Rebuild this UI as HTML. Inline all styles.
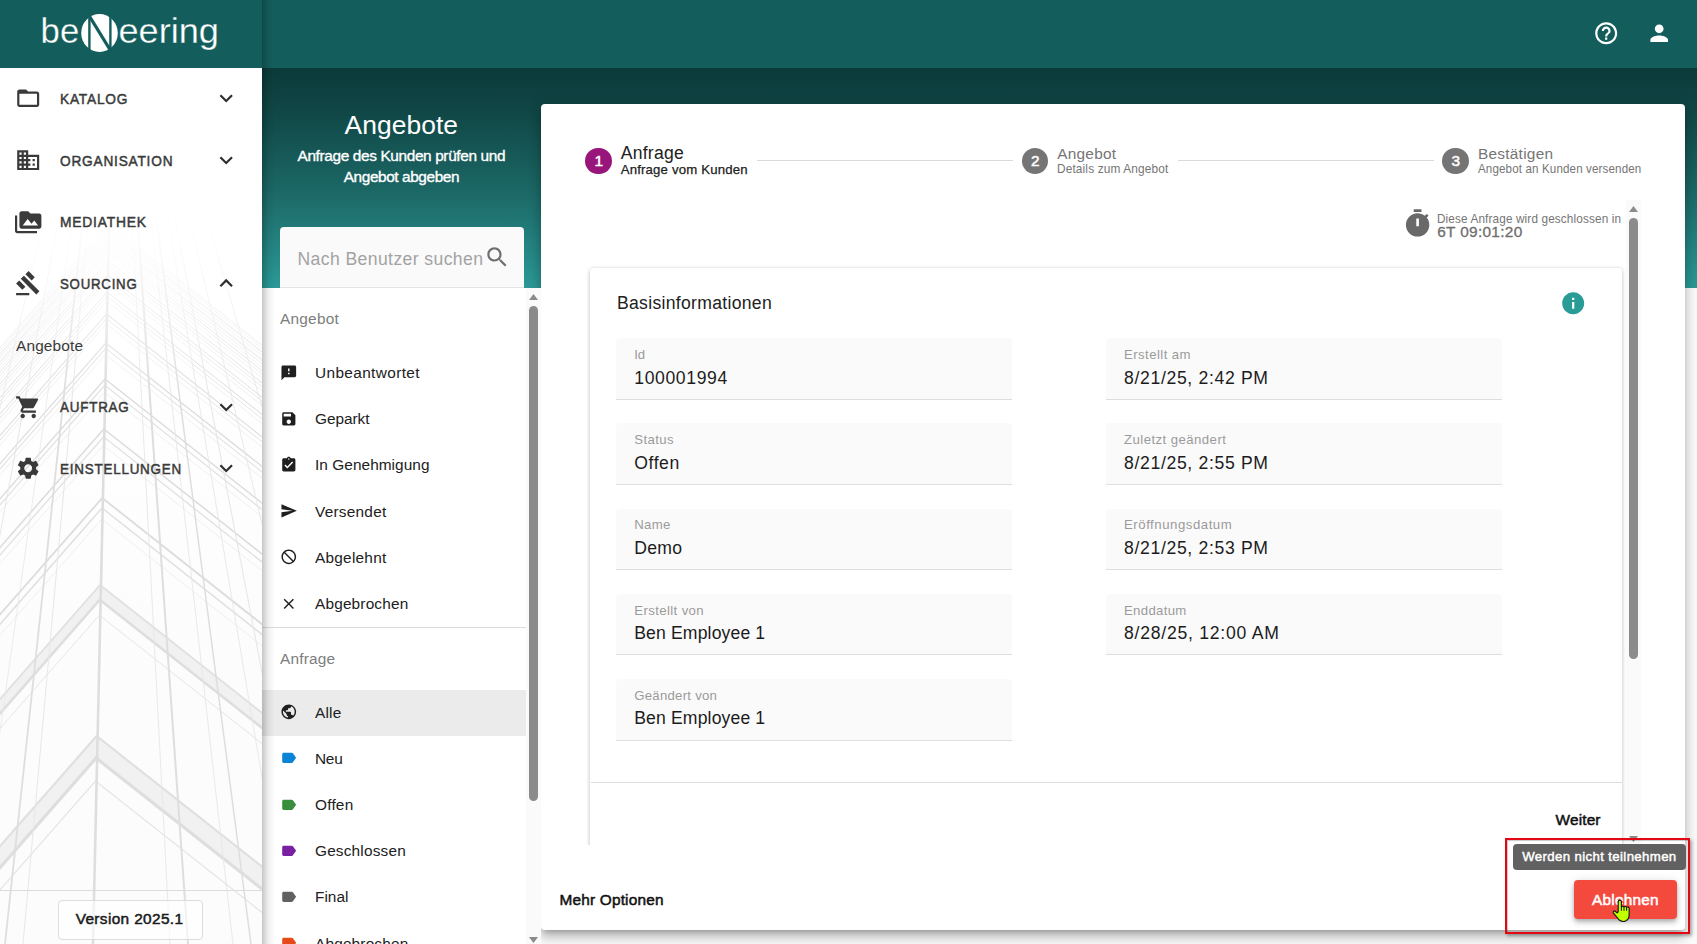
<!DOCTYPE html>
<html><head><meta charset="utf-8"><title>Angebote</title>
<style>
html,body{margin:0;padding:0}
html{width:1697px;height:944px;overflow:hidden}
body{width:1697px;height:944px;overflow:hidden;position:relative;background:#fafafa;font-family:"Liberation Sans",sans-serif}
.a{position:absolute}
.t{position:absolute;white-space:pre;line-height:1;font-family:"Liberation Sans",sans-serif}
#texts{position:absolute;left:0;top:0;z-index:5}
svg{position:absolute;overflow:visible}
#topbar{left:0;top:0;width:1697px;height:68px;background:#135e5c}
#grad{left:262px;top:68px;width:1435px;height:220px;background:linear-gradient(180deg,#0b3a3a 0%,#104746 20%,#1b6765 55%,#2b9996 100%)}
#side{left:0;top:68px;width:262px;height:876px;background:linear-gradient(180deg,#fff 30%,#fcfcfc 70%);overflow:hidden}
#sideshadow{left:262px;top:0;width:13px;height:944px;background:linear-gradient(90deg,rgba(0,0,0,.22),rgba(0,0,0,.06) 50%,rgba(0,0,0,0));z-index:3}
#list{left:262px;top:288px;width:279px;height:656px;background:#fff}
#search{left:280px;top:227px;width:244px;height:60px;background:#fafafa;border-radius:4px 4px 0 0;border-bottom:1px solid #e4e4e4}
#sel{left:262px;top:690px;width:264px;height:46px;background:#ebebeb}
#ldiv{left:262px;top:627px;width:264px;height:1px;background:#dcdcdc}
#lsb{left:526px;top:288px;width:15px;height:656px;background:#fafafa}
#lthumb{left:529px;top:306px;width:9px;height:495px;background:#8b8b8b;border-radius:5px}
#card{left:541px;top:104px;width:1144px;height:826px;background:#fff;border-radius:4px;box-shadow:0 5px 5px -3px rgba(0,0,0,.2),0 8px 10px 1px rgba(0,0,0,.14),0 3px 14px 2px rgba(0,0,0,.12)}
#inner{left:586px;top:262px;width:1040px;height:583px;overflow:hidden}
#icard{left:4px;top:5.6px;width:1031.5px;height:620px;background:#fff;border-radius:4px;box-shadow:0 1px 4px 0 rgba(0,0,0,.28)}
.f{position:absolute;width:395.5px;height:61px;background:#fafafa;border-bottom:1px solid #dedede;border-radius:4px 4px 0 0}
.sl{position:absolute;height:1px;background:#dadada;top:160px}
.sc{position:absolute;width:26.6px;height:26.6px;border-radius:50%;top:147.6px;background:#757575}
#isb{left:1626px;top:200px;width:15px;height:645px;background:#fafafa}
#ithumb{left:1629.3px;top:218px;width:8.8px;height:440.5px;background:#8b8b8b;border-radius:5px}
#idiv{left:590.5px;top:782px;width:1031px;height:1px;background:#dcdcdc}
#tip{left:1513px;top:844px;width:173px;height:26px;background:#616161;border-radius:4px;z-index:4}
#btn{left:1574px;top:880px;width:103px;height:39px;background:#f44a3e;border-radius:4px;box-shadow:0 2px 4px -1px rgba(0,0,0,.2),0 4px 5px 0 rgba(0,0,0,.14),0 1px 10px 0 rgba(0,0,0,.12);z-index:4}
#red{left:1505px;top:838px;width:181px;height:92px;border:2px solid #e30613;z-index:6;box-shadow:inset 1px 1px 1px rgba(0,0,0,.22),2px 2px 3px rgba(0,0,0,.3)}
#ver{left:58px;top:900px;width:142.5px;height:37.5px;border:1px solid #dcdcdc;border-radius:4px;background:rgba(255,255,255,.6)}
#sdiv{left:0;top:890px;width:262px;height:1px;background:#dcdcdc}

</style></head>
<body>
<div class="a" id="grad"></div>
<div class="a" id="topbar"></div>
<!-- SIDEBAR -->
<div class="a" id="side">
<svg style="left:0;top:0" width="262" height="876" viewBox="0 0 262 876"><path d="M-6 785.0L96.6 668.0L268 803.4L268 825.8L96.1 690.0L-6 806.4Z" fill="#f1f1f1"/><path d="M-6 785.0L96.6 668.0L268 803.4" stroke="#e0e0e0" stroke-width="2.20" fill="none" stroke-linejoin="miter"/><path d="M-6 806.4L96.1 690.0L268 825.8" stroke="#dedede" stroke-width="3.20" fill="none" stroke-linejoin="miter"/><path d="M-6 828.8L95.5 713.1L268 849.3" stroke="#e4e4e4" stroke-width="1.20" fill="none" stroke-linejoin="miter"/><path d="M-6 638.0L100.1 517.0L268 649.6L268 664.6L99.8 531.7L-6 652.3Z" fill="#f1f1f1"/><path d="M-6 638.0L100.1 517.0L268 649.6" stroke="#e0e0e0" stroke-width="1.80" fill="none" stroke-linejoin="miter"/><path d="M-6 652.3L99.8 531.7L268 664.6" stroke="#dedede" stroke-width="2.62" fill="none" stroke-linejoin="miter"/><path d="M-6 667.3L99.4 547.1L268 680.3" stroke="#e4e4e4" stroke-width="0.98" fill="none" stroke-linejoin="miter"/><path d="M-6 553.3L102.2 430.0L268 561.0" stroke="#dcdcdc" stroke-width="1.80" fill="none" stroke-linejoin="miter"/><path d="M-6 563.1L102.0 440.0L268 571.2" stroke="#e0e0e0" stroke-width="1.50" fill="none" stroke-linejoin="miter"/><path d="M-6 573.9L101.7 451.2L268 582.6" stroke="#e6e6e6" stroke-width="0.60" fill="none" stroke-linejoin="miter"/><path d="M-6 486.2L103.8 361.0L268 490.7" stroke="#dcdcdc" stroke-width="1.57" fill="none" stroke-linejoin="miter"/><path d="M-6 493.8L103.6 368.8L268 498.7" stroke="#e0e0e0" stroke-width="1.31" fill="none" stroke-linejoin="miter"/><path d="M-6 502.2L103.4 377.5L268 507.5" stroke="#e6e6e6" stroke-width="0.60" fill="none" stroke-linejoin="miter"/><path d="M-6 437.5L105.0 311.0L268 439.8" stroke="#dcdcdc" stroke-width="1.36" fill="none" stroke-linejoin="miter"/><path d="M-6 443.7L104.8 317.4L268 446.3" stroke="#e0e0e0" stroke-width="1.14" fill="none" stroke-linejoin="miter"/><path d="M-6 450.6L104.7 324.5L268 453.5" stroke="#e6e6e6" stroke-width="0.60" fill="none" stroke-linejoin="miter"/><path d="M-6 402.5L105.8 275.0L268 403.1" stroke="#dcdcdc" stroke-width="1.20" fill="none" stroke-linejoin="miter"/><path d="M-6 407.8L105.7 280.4L268 408.7" stroke="#e0e0e0" stroke-width="1.01" fill="none" stroke-linejoin="miter"/><path d="M-6 413.7L105.6 286.5L268 414.8" stroke="#e6e6e6" stroke-width="0.60" fill="none" stroke-linejoin="miter"/><path d="M-6 374.3L106.5 246.0L268 373.6" stroke="#dcdcdc" stroke-width="1.08" fill="none" stroke-linejoin="miter"/><path d="M-6 378.9L106.4 250.7L268 378.4" stroke="#e0e0e0" stroke-width="0.91" fill="none" stroke-linejoin="miter"/><path d="M-6 384.0L106.3 256.0L268 383.8" stroke="#e6e6e6" stroke-width="0.60" fill="none" stroke-linejoin="miter"/><path d="M-6 352.8L107.0 224.0L268 351.2" stroke="#dcdcdc" stroke-width="0.99" fill="none" stroke-linejoin="miter"/><path d="M-6 357.0L106.9 228.2L268 355.5" stroke="#e0e0e0" stroke-width="0.84" fill="none" stroke-linejoin="miter"/><path d="M-6 361.5L106.8 232.9L268 360.3" stroke="#e6e6e6" stroke-width="0.60" fill="none" stroke-linejoin="miter"/><path d="M-6 336.3L107.4 207.0L268 333.9" stroke="#dcdcdc" stroke-width="0.92" fill="none" stroke-linejoin="miter"/><path d="M-6 340.1L107.3 210.9L268 337.8" stroke="#e0e0e0" stroke-width="0.78" fill="none" stroke-linejoin="miter"/><path d="M-6 344.2L107.2 215.2L268 342.2" stroke="#e6e6e6" stroke-width="0.60" fill="none" stroke-linejoin="miter"/><path d="M-6 322.7L107.8 193.0L268 319.6" stroke="#dcdcdc" stroke-width="0.86" fill="none" stroke-linejoin="miter"/><path d="M-6 326.2L107.7 196.6L268 323.2" stroke="#e0e0e0" stroke-width="0.73" fill="none" stroke-linejoin="miter"/><path d="M-6 330.0L107.6 200.5L268 327.3" stroke="#e6e6e6" stroke-width="0.60" fill="none" stroke-linejoin="miter"/><path d="M-6 311.0L108.0 181.0L268 307.4" stroke="#dcdcdc" stroke-width="0.81" fill="none" stroke-linejoin="miter"/><path d="M-6 314.2L108.0 184.3L268 310.8" stroke="#e0e0e0" stroke-width="0.69" fill="none" stroke-linejoin="miter"/><path d="M-6 317.9L107.9 188.0L268 314.5" stroke="#e6e6e6" stroke-width="0.60" fill="none" stroke-linejoin="miter"/><path d="M-6 301.3L108.3 171.0L268 297.2" stroke="#dcdcdc" stroke-width="0.76" fill="none" stroke-linejoin="miter"/><path d="M-6 304.3L108.2 174.1L268 300.4" stroke="#e0e0e0" stroke-width="0.65" fill="none" stroke-linejoin="miter"/><path d="M-6 307.7L108.1 177.6L268 303.9" stroke="#e6e6e6" stroke-width="0.60" fill="none" stroke-linejoin="miter"/><path d="M-6 293.5L108.5 163.0L268 289.0" stroke="#dcdcdc" stroke-width="0.73" fill="none" stroke-linejoin="miter"/><path d="M-6 296.4L108.4 166.0L268 292.1" stroke="#e0e0e0" stroke-width="0.62" fill="none" stroke-linejoin="miter"/><path d="M-6 299.6L108.3 169.3L268 295.5" stroke="#e6e6e6" stroke-width="0.60" fill="none" stroke-linejoin="miter"/><path d="M-6 286.7L108.6 156.0L268 281.9" stroke="#dcdcdc" stroke-width="0.70" fill="none" stroke-linejoin="miter"/><path d="M-6 289.5L108.6 158.9L268 284.8" stroke="#e0e0e0" stroke-width="0.60" fill="none" stroke-linejoin="miter"/><path d="M-6 292.5L108.5 162.0L268 288.1" stroke="#e6e6e6" stroke-width="0.60" fill="none" stroke-linejoin="miter"/><path d="M116.0 -158.0L-125 876" stroke="#e7e7e7" stroke-width="0.8" fill="none"/><path d="M116.0 -158.0L-76 876" stroke="#e7e7e7" stroke-width="1" fill="none"/><path d="M116.0 -158.0L-30 876" stroke="#e7e7e7" stroke-width="0.8" fill="none"/><path d="M116.0 -158.0L5 876" stroke="#dedede" stroke-width="1.8" fill="none"/><path d="M116.0 -158.0L23 876" stroke="#e7e7e7" stroke-width="1" fill="none"/><path d="M116.0 -158.0L93 876" stroke="#dedede" stroke-width="2.6" fill="none"/><path d="M116.0 -158.0L170 876" stroke="#e7e7e7" stroke-width="0.9" fill="none"/><path d="M116.0 -158.0L188 876" stroke="#dedede" stroke-width="2" fill="none"/><path d="M116.0 -158.0L233 876" stroke="#e7e7e7" stroke-width="0.9" fill="none"/><path d="M116.0 -158.0L251 876" stroke="#dedede" stroke-width="1.5" fill="none"/><path d="M116.0 -158.0L290 876" stroke="#e7e7e7" stroke-width="0.9" fill="none"/><path d="M116.0 -158.0L314 876" stroke="#e7e7e7" stroke-width="1.1" fill="none"/><path d="M116.0 -158.0L362 876" stroke="#e7e7e7" stroke-width="0.9" fill="none"/><path d="M116.0 -158.0L420 876" stroke="#e7e7e7" stroke-width="1" fill="none"/></svg><div class="a" style="left:0;top:0;width:262px;height:330px;background:linear-gradient(180deg,#fff 0%,#fff 42%,rgba(255,255,255,.8) 58%,rgba(255,255,255,.35) 80%,rgba(255,255,255,0) 100%)"></div>
</div>
<div class="a" id="sdiv"></div>
<div class="a" id="ver"></div>
<div class="a" id="sideshadow"></div>
<!-- LOGO -->
<svg id="logo" style="left:0;top:0" width="262" height="68" viewBox="0 0 262 68">
 <g font-family="Liberation Sans, sans-serif" font-size="35" fill="#fff" stroke="#135e5c" stroke-width="0.3">
  <text x="40.6" y="43.4" textLength="38.6" lengthAdjust="spacingAndGlyphs">be</text>
  <text x="118.4" y="43.4" textLength="100.6" lengthAdjust="spacingAndGlyphs">eering</text>
 </g>
 <ellipse cx="99.5" cy="33" rx="18.3" ry="18.9" fill="#fff"/>
 <g stroke="#135e5c" stroke-width="2.4" fill="none" stroke-linecap="butt">
  <path d="M89.4 13V53"/><path d="M110.4 13V53"/><path d="M89.6 16.5L110.2 50" stroke-width="3.3"/>
 </g>
</svg>
<!-- topbar icons -->
<svg style="left:1592.8px;top:19.8px" width="26.4" height="26.4" viewBox="0 0 24 24"><path fill="#fff" d="M11 18h2v-2h-2v2zm1-16C6.48 2 2 6.48 2 12s4.48 10 10 10 10-4.480 10-10S17.520 2 12 2zm0 18c-4.410 0-8-3.590-8-8s3.590-8 8-8 8 3.590 8 8-3.590 8-8 8zm0-14c-2.210 0-4 1.790-4 4h2c0-1.100.9-2 2-2s2 .9 2 2c0 2-3 1.750-3 5h2c0-2.250 3-2.500 3-5 0-2.210-1.790-4-4-4z"/></svg>
<svg style="left:1645.8px;top:19.8px" width="26.4" height="26.4" viewBox="0 0 24 24"><path fill="#fff" d="M12 12c2.210 0 4-1.790 4-4s-1.790-4-4-4-4 1.790-4 4 1.790 4 4 4zm0 2c-2.670 0-8 1.340-8 4v2h16v-2c0-2.660-5.330-4-8-4z"/></svg>
<!-- sidebar icons -->
<svg style="left:15.05px;top:85.40px" width="26.4" height="26.4" viewBox="0 0 24 24"><path fill="#3a3a3a" d="M20 6h-8l-2-2H4c-1.100 0-1.990.9-1.990 2L2 18c0 1.100.9 2 2 2h16c1.100 0 2-.9 2-2V8c0-1.100-.9-2-2-2zm0 12H4V8h16v10z"/></svg>
<svg style="left:213.30px;top:85.40px" width="26.4" height="26.4" viewBox="0 0 24 24"><path fill="#2e2e2e" d="M16.590 8.590L12 13.170 7.410 8.590 6 10l6 6 6-6z"/></svg>
<svg style="left:15.05px;top:147.07px" width="26.4" height="26.4" viewBox="0 0 24 24"><path fill="#3a3a3a" d="M12 7V3H2v18h20V7H12zM6 19H4v-2h2v2zm0-4H4v-2h2v2zm0-4H4V9h2v2zm0-4H4V5h2v2zm4 12H8v-2h2v2zm0-4H8v-2h2v2zm0-4H8V9h2v2zm0-4H8V5h2v2zm10 12h-8v-2h2v-2h-2v-2h2v-2h-2V9h8v10zm-2-8h-2v2h2v-2zm0 4h-2v2h2v-2z"/></svg>
<svg style="left:213.30px;top:147.07px" width="26.4" height="26.4" viewBox="0 0 24 24"><path fill="#2e2e2e" d="M16.590 8.590L12 13.170 7.410 8.590 6 10l6 6 6-6z"/></svg>
<svg style="left:15.05px;top:208.74px" width="26.4" height="26.4" viewBox="0 0 24 24"><path fill="#3a3a3a" d="M2 6H0v5h.01L0 20c0 1.100.9 2 2 2h18v-2H2V6zm20-2h-8l-2-2H6c-1.100 0-1.990.9-1.990 2L4 16c0 1.100.9 2 2 2h16c1.100 0 2-.9 2-2V6c0-1.100-.9-2-2-2zM7 15l4.500-6 3.500 4.510 2.500-3.010L21 15H7z"/></svg>
<svg style="left:15.05px;top:270.41px" width="26.4" height="26.4" viewBox="0 0 24 24"><path fill="#3a3a3a" d="M1 21h12v2H1zM5.245 8.070l2.830-2.827 14.140 14.142-2.828 2.828zM12.317 1l5.657 5.656-2.830 2.830-5.654-5.660zM3.825 9.485l5.657 5.657-2.828 2.828-5.657-5.657z"/></svg>
<svg style="left:213.30px;top:270.41px" width="26.4" height="26.4" viewBox="0 0 24 24"><path fill="#2e2e2e" d="M12 8l-6 6 1.410 1.410L12 10.830l4.590 4.580L18 14z"/></svg>
<svg style="left:15.05px;top:393.75px" width="26.4" height="26.4" viewBox="0 0 24 24"><path fill="#3a3a3a" d="M7 18c-1.100 0-1.990.9-1.990 2S5.900 22 7 22s2-.9 2-2-.9-2-2-2zM1 2v2h2l3.600 7.590-1.350 2.450c-.16.28-.25.61-.25.96 0 1.100.9 2 2 2h12v-2H7.420c-.14 0-.25-.11-.25-.25l.03-.12.9-1.630h7.450c.75 0 1.410-.41 1.750-1.030l3.580-6.490c.08-.14.12-.31.12-.48 0-.55-.45-1-1-1H5.210l-.94-2H1zm16 16c-1.100 0-1.990.9-1.990 2s.89 2 1.990 2 2-.9 2-2-.9-2-2-2z"/></svg>
<svg style="left:213.30px;top:393.75px" width="26.4" height="26.4" viewBox="0 0 24 24"><path fill="#2e2e2e" d="M16.590 8.590L12 13.170 7.410 8.590 6 10l6 6 6-6z"/></svg>
<svg style="left:15.05px;top:455.42px" width="26.4" height="26.4" viewBox="0 0 24 24"><path fill="#3a3a3a" d="M19.140 12.940c.04-.3.06-.61.06-.94 0-.32-.02-.64-.07-.94l2.030-1.580c.18-.14.23-.41.12-.61l-1.920-3.320c-.12-.22-.37-.29-.59-.22l-2.390.96c-.5-.38-1.030-.7-1.620-.94l-.36-2.540c-.04-.24-.24-.41-.48-.41h-3.840c-.24 0-.43.17-.47.41l-.36 2.540c-.59.24-1.130.57-1.620.94l-2.390-.96c-.22-.08-.47 0-.59.22L2.740 8.870c-.12.21-.08.47.12.61l2.030 1.580c-.05.3-.09.63-.09.94s.02.64.07.94l-2.030 1.580c-.18.14-.23.41-.12.61l1.920 3.320c.12.22.37.29.59.22l2.390-.96c.5.38 1.030.7 1.620.94l.36 2.540c.05.24.24.41.48.41h3.840c.24 0 .44-.17.47-.41l.36-2.540c.59-.24 1.130-.56 1.620-.94l2.390.96c.22.08.47 0 .59-.22l1.920-3.320c.12-.22.07-.47-.12-.61l-2.010-1.580zM12 15.600c-1.980 0-3.600-1.620-3.600-3.600s1.620-3.600 3.600-3.600 3.600 1.620 3.600 3.600-1.620 3.600-3.600 3.600z"/></svg>
<svg style="left:213.30px;top:455.42px" width="26.4" height="26.4" viewBox="0 0 24 24"><path fill="#2e2e2e" d="M16.590 8.590L12 13.170 7.410 8.590 6 10l6 6 6-6z"/></svg>
<!-- MIDDLE -->
<div class="a" id="search"></div>
<svg style="left:483.8px;top:243.5px" width="26.4" height="26.4" viewBox="0 0 24 24"><path fill="#6f6f6f" d="M15.5 14h-.79l-.28-.27C15.410 12.590 16 11.110 16 9.500 16 5.910 13.090 3 9.500 3S3 5.910 3 9.500 5.910 16 9.500 16c1.610 0 3.090-.59 4.230-1.570l.27.28v.79l5 4.990L20.490 19l-4.990-5zm-6 0C7.010 14 5 11.990 5 9.500S7.010 5 9.500 5 14 7.010 14 9.500 11.990 14 9.500 14z"/></svg>
<!-- CARD -->
<div class="a" id="card"></div>
<div class="a" id="list"></div>
<div class="a" id="sel"></div>
<div class="a" id="ldiv"></div>
<div class="a" id="lsb"></div>
<div class="a" id="lthumb"></div>
<svg style="left:528px;top:290px" width="11" height="12" viewBox="0 0 11 12"><path fill="#8b8b8b" d="M1 10L5.500 4 10 10z"/></svg>
<svg style="left:528px;top:933px" width="11" height="12" viewBox="0 0 11 12"><path fill="#8b8b8b" d="M1 4L5.500 10 10 4z"/></svg>
<svg style="left:280.00px;top:363.50px" width="17.6" height="17.6" viewBox="0 0 24 24"><path fill="#1f1f1f" d="M20 2H4c-1.100 0-1.990.9-1.990 2L2 22l4-4h14c1.100 0 2-.9 2-2V4c0-1.100-.9-2-2-2zm-7 12h-2v-2h2v2zm0-4h-2V6h2v4z"/></svg>
<svg style="left:280.00px;top:409.70px" width="17.6" height="17.6" viewBox="0 0 24 24"><path fill="#1f1f1f" d="M17 3H5c-1.110 0-2 .9-2 2v14c0 1.100.89 2 2 2h14c1.100 0 2-.9 2-2V7l-4-4zm-5 16c-1.660 0-3-1.340-3-3s1.340-3 3-3 3 1.340 3 3-1.340 3-3 3zm3-10H5V5h10v4z"/></svg>
<svg style="left:280.00px;top:455.90px" width="17.6" height="17.6" viewBox="0 0 24 24"><path fill="#1f1f1f" d="M19 3h-4.180C14.400 1.840 13.300 1 12 1c-1.300 0-2.400.84-2.820 2H5c-1.100 0-2 .9-2 2v14c0 1.100.9 2 2 2h14c1.100 0 2-.9 2-2V5c0-1.100-.9-2-2-2zm-7 0c.55 0 1 .45 1 1s-.45 1-1 1-1-.45-1-1 .45-1 1-1zm-2 14l-4-4 1.410-1.410L10 14.170l6.590-6.590L18 9l-8 8z"/></svg>
<svg style="left:280.00px;top:502.10px" width="17.6" height="17.6" viewBox="0 0 24 24"><path fill="#1f1f1f" d="M2.010 21L23 12 2.010 3 2 10l15 2-15 2z"/></svg>
<svg style="left:280.00px;top:548.30px" width="17.6" height="17.6" viewBox="0 0 24 24"><path fill="#1f1f1f" d="M12 2C6.480 2 2 6.480 2 12s4.480 10 10 10 10-4.480 10-10S17.520 2 12 2zm0 18c-4.420 0-8-3.580-8-8 0-1.850.63-3.550 1.690-4.900L16.900 18.310C15.550 19.370 13.850 20 12 20zm6.310-3.100L7.100 5.690C8.450 4.630 10.150 4 12 4c4.420 0 8 3.580 8 8 0 1.850-.63 3.550-1.690 4.900z"/></svg>
<svg style="left:280.00px;top:594.50px" width="17.6" height="17.6" viewBox="0 0 24 24"><path fill="#1f1f1f" d="M19 6.410L17.590 5 12 10.590 6.410 5 5 6.410 10.590 12 5 17.590 6.410 19 12 13.410 17.590 19 19 17.590 13.410 12z"/></svg>
<svg style="left:280.00px;top:703.20px" width="17.6" height="17.6" viewBox="0 0 24 24"><path fill="#1f1f1f" d="M12 2C6.480 2 2 6.480 2 12s4.480 10 10 10 10-4.480 10-10S17.520 2 12 2zm-1 17.930c-3.950-.49-7-3.850-7-7.930 0-.62.08-1.210.21-1.790L9 15v1c0 1.100.9 2 2 2v1.930zm6.900-2.540c-.26-.81-1-1.390-1.900-1.390h-1v-3c0-.55-.45-1-1-1H8v-2h2c.55 0 1-.45 1-1V7h2c1.100 0 2-.9 2-2v-.41c2.930 1.190 5 4.060 5 7.410 0 2.080-.8 3.970-2.100 5.390z"/></svg>
<svg style="left:280.00px;top:749.40px" width="17.6" height="17.6" viewBox="0 0 24 24"><path fill="#0b84d8" d="M17.630 5.840C17.270 5.330 16.670 5 16 5L5 5.010C3.900 5.010 3 5.900 3 7v10c0 1.100.9 1.990 2 1.990L16 19c.67 0 1.270-.33 1.630-.84L22 12l-4.370-6.160z"/></svg>
<svg style="left:280.00px;top:795.60px" width="17.6" height="17.6" viewBox="0 0 24 24"><path fill="#388e3c" d="M17.630 5.840C17.270 5.330 16.670 5 16 5L5 5.010C3.900 5.010 3 5.900 3 7v10c0 1.100.9 1.990 2 1.990L16 19c.67 0 1.270-.33 1.630-.84L22 12l-4.370-6.160z"/></svg>
<svg style="left:280.00px;top:841.80px" width="17.6" height="17.6" viewBox="0 0 24 24"><path fill="#7b1fa2" d="M17.630 5.840C17.270 5.330 16.670 5 16 5L5 5.010C3.900 5.010 3 5.900 3 7v10c0 1.100.9 1.990 2 1.990L16 19c.67 0 1.270-.33 1.630-.84L22 12l-4.370-6.160z"/></svg>
<svg style="left:280.00px;top:888.00px" width="17.6" height="17.6" viewBox="0 0 24 24"><path fill="#616161" d="M17.630 5.840C17.270 5.330 16.670 5 16 5L5 5.010C3.900 5.010 3 5.900 3 7v10c0 1.100.9 1.990 2 1.990L16 19c.67 0 1.270-.33 1.630-.84L22 12l-4.370-6.160z"/></svg>
<svg style="left:280.00px;top:934.20px" width="17.6" height="17.6" viewBox="0 0 24 24"><path fill="#e64a19" d="M17.630 5.840C17.270 5.330 16.670 5 16 5L5 5.010C3.900 5.010 3 5.900 3 7v10c0 1.100.9 1.990 2 1.990L16 19c.67 0 1.270-.33 1.630-.84L22 12l-4.370-6.160z"/></svg>
<div class="sc" style="left:585.2px;background:#98167b"></div>
<div class="sc" style="left:1021.7px"></div>
<div class="sc" style="left:1442.2px"></div>
<div class="sl" style="left:757px;width:256px"></div>
<div class="sl" style="left:1178px;width:256px"></div>
<!-- timer -->
<svg style="left:1401.5px;top:207.6px" width="31.2" height="31.2" viewBox="0 0 24 24"><path fill="#696969" d="M15 1H9v2h6V1zm4.030 6.390l1.420-1.420c-.43-.51-.9-.99-1.410-1.410l-1.420 1.420C16.070 4.740 14.120 4 12 4c-4.970 0-9 4.030-9 9s4.020 9 9 9 9-4.030 9-9c0-2.120-.74-4.070-1.970-5.610zM13 14h-2V8h2v6z"/></svg>
<!-- inner scroll -->
<div class="a" id="inner"><div class="a" id="icard"></div></div>
<div class="a" id="idiv"></div>
<div class="f" style="left:616.25px;top:338.30px;height:60.70px"></div>
<div class="f" style="left:1106px;top:338.30px;height:60.70px"></div>
<div class="f" style="left:616.25px;top:423.45px;height:60.55px"></div>
<div class="f" style="left:1106px;top:423.45px;height:60.55px"></div>
<div class="f" style="left:616.25px;top:508.60px;height:60.40px"></div>
<div class="f" style="left:1106px;top:508.60px;height:60.40px"></div>
<div class="f" style="left:616.25px;top:593.75px;height:60.25px"></div>
<div class="f" style="left:1106px;top:593.75px;height:60.25px"></div>
<div class="f" style="left:616.25px;top:678.90px;height:60.70px"></div>
<svg style="left:1560.3px;top:289.8px" width="26.4" height="26.4" viewBox="0 0 24 24"><path fill="#2b9b98" d="M12 2C6.480 2 2 6.480 2 12s4.480 10 10 10 10-4.480 10-10S17.520 2 12 2zm1 15h-2v-6h2v6zm0-8h-2V7h2v2z"/></svg>
<div class="a" id="isb"></div>
<div class="a" id="ithumb"></div>
<svg style="left:1628px;top:201.5px" width="11" height="12" viewBox="0 0 11 12"><path fill="#8b8b8b" d="M1 10L5.500 4 10 10z"/></svg>
<svg style="left:1628px;top:832px" width="11" height="12" viewBox="0 0 11 12"><path fill="#8b8b8b" d="M1 4L5.500 10 10 4z"/></svg>
<!-- bottom right -->
<div class="a" id="tip"></div>
<div class="a" id="btn"></div>
<div class="a" id="red"></div>
<svg style="left:1611px;top:898px;z-index:10" width="22" height="26" viewBox="0 0 22 26">
<path d="M7.2 13.8L7.2 3.800C7.2 1.600 10.400 1.600 10.400 3.800L10.400 8.800C11 8 12.600 8 13 8.900C13.600 8.300 15.200 8.400 15.600 9.300C16.300 8.800 18.200 9 18.200 10.400L18.100 17.500C18 20 16.600 22 14.600 23C12.600 23.800 10 23.300 8.200 22L2.500 15.100C1.500 13.800 2.900 12.300 4.200 13.300L6.100 14.900Z" fill="#bfff00" stroke="#141414" stroke-width="1.15" stroke-linejoin="round"/>
<path d="M10.400 8.800V12.800M13 9.100V12.800M15.600 9.500V12.800" stroke="#141414" stroke-width="1" fill="none"/>
</svg>

<div id="texts">
<span class="t" style="left:60.00px;top:91.00px;font-size:15.5px;font-weight:400;color:#3a3a3a;letter-spacing:0.900px;transform:scaleX(0.8844);transform-origin:0 0;-webkit-text-stroke:0.5px #3a3a3a;">KATALOG</span>
<span class="t" style="left:60.00px;top:153.00px;font-size:15.5px;font-weight:400;color:#3a3a3a;letter-spacing:0.900px;transform:scaleX(0.8817);transform-origin:0 0;-webkit-text-stroke:0.5px #3a3a3a;">ORGANISATION</span>
<span class="t" style="left:60.00px;top:214.00px;font-size:15.5px;font-weight:400;color:#3a3a3a;letter-spacing:0.900px;transform:scaleX(0.8913);transform-origin:0 0;-webkit-text-stroke:0.5px #3a3a3a;">MEDIATHEK</span>
<span class="t" style="left:60.00px;top:276.00px;font-size:15.5px;font-weight:400;color:#3a3a3a;letter-spacing:0.900px;transform:scaleX(0.8544);transform-origin:0 0;-webkit-text-stroke:0.5px #3a3a3a;">SOURCING</span>
<span class="t" style="left:16.00px;top:338.00px;font-size:15.4px;font-weight:400;color:#3a3a3a;letter-spacing:0.156px;">Angebote</span>
<span class="t" style="left:60.00px;top:399.00px;font-size:15.5px;font-weight:400;color:#3a3a3a;letter-spacing:0.900px;transform:scaleX(0.8652);transform-origin:0 0;-webkit-text-stroke:0.5px #3a3a3a;">AUFTRAG</span>
<span class="t" style="left:60.00px;top:461.00px;font-size:15.5px;font-weight:400;color:#3a3a3a;letter-spacing:0.900px;transform:scaleX(0.8660);transform-origin:0 0;-webkit-text-stroke:0.5px #3a3a3a;">EINSTELLUNGEN</span>
<span class="t" style="left:75.70px;top:911.00px;font-size:15.4px;font-weight:400;color:#1a1a1a;letter-spacing:0.355px;-webkit-text-stroke:0.5px #1a1a1a;">Version 2025.1</span>
<span class="t" style="left:344.50px;top:112.00px;font-size:26.4px;font-weight:400;color:#fff;letter-spacing:0.071px;">Angebote</span>
<span class="t" style="left:297.50px;top:148.00px;font-size:15.4px;font-weight:400;color:#fff;letter-spacing:-0.365px;-webkit-text-stroke:0.35px #fff;">Anfrage des Kunden prüfen und</span>
<span class="t" style="left:343.75px;top:169.00px;font-size:15.4px;font-weight:400;color:#fff;letter-spacing:-0.414px;-webkit-text-stroke:0.35px #fff;">Angebot abgeben</span>
<span class="t" style="left:297.50px;top:251.00px;font-size:17.6px;font-weight:400;color:#a3a3a3;letter-spacing:0.395px;">Nach Benutzer suchen</span>
<span class="t" style="left:280.00px;top:311.00px;font-size:15.4px;font-weight:400;color:#7d7d7d;letter-spacing:0.234px;">Angebot</span>
<span class="t" style="left:315.00px;top:365.00px;font-size:15.4px;font-weight:400;color:#212121;letter-spacing:0.366px;">Unbeantwortet</span>
<span class="t" style="left:315.00px;top:411.00px;font-size:15.4px;font-weight:400;color:#212121;letter-spacing:-0.042px;">Geparkt</span>
<span class="t" style="left:315.00px;top:457.00px;font-size:15.4px;font-weight:400;color:#212121;letter-spacing:0.053px;">In Genehmigung</span>
<span class="t" style="left:315.00px;top:504.00px;font-size:15.4px;font-weight:400;color:#212121;letter-spacing:0.242px;">Versendet</span>
<span class="t" style="left:315.00px;top:550.00px;font-size:15.4px;font-weight:400;color:#212121;letter-spacing:0.240px;">Abgelehnt</span>
<span class="t" style="left:315.00px;top:596.00px;font-size:15.4px;font-weight:400;color:#212121;letter-spacing:0.169px;">Abgebrochen</span>
<span class="t" style="left:280.00px;top:651.00px;font-size:15.4px;font-weight:400;color:#7d7d7d;letter-spacing:0.182px;">Anfrage</span>
<span class="t" style="left:315.00px;top:705.00px;font-size:15.4px;font-weight:400;color:#212121;letter-spacing:0.193px;">Alle</span>
<span class="t" style="left:315.00px;top:751.00px;font-size:15.4px;font-weight:400;color:#212121;letter-spacing:-0.267px;">Neu</span>
<span class="t" style="left:315.00px;top:797.00px;font-size:15.4px;font-weight:400;color:#212121;letter-spacing:0.206px;">Offen</span>
<span class="t" style="left:315.00px;top:843.00px;font-size:15.4px;font-weight:400;color:#212121;letter-spacing:0.172px;">Geschlossen</span>
<span class="t" style="left:315.00px;top:889.00px;font-size:15.4px;font-weight:400;color:#212121;letter-spacing:0.010px;">Final</span>
<span class="t" style="left:315.00px;top:936.00px;font-size:15.4px;font-weight:400;color:#212121;letter-spacing:0.169px;">Abgebrochen</span>
<span class="t" style="left:620.75px;top:145.00px;font-size:17.6px;font-weight:400;color:#212121;letter-spacing:0.229px;">Anfrage</span>
<span class="t" style="left:620.75px;top:163.00px;font-size:13.2px;font-weight:400;color:#212121;letter-spacing:0.167px;-webkit-text-stroke:0.25px #212121;">Anfrage vom Kunden</span>
<span class="t" style="left:1057.25px;top:146.00px;font-size:15.4px;font-weight:400;color:#757575;letter-spacing:0.234px;">Angebot</span>
<span class="t" style="left:1057.25px;top:162.00px;font-size:13.2px;font-weight:400;color:#757575;letter-spacing:0.150px;transform:scaleX(0.8996);transform-origin:0 0;">Details zum Angebot</span>
<span class="t" style="left:1478.00px;top:146.00px;font-size:15.4px;font-weight:400;color:#757575;letter-spacing:0.252px;">Bestätigen</span>
<span class="t" style="left:1478.00px;top:162.00px;font-size:13.2px;font-weight:400;color:#757575;letter-spacing:0.150px;transform:scaleX(0.8788);transform-origin:0 0;">Angebot an Kunden versenden</span>
<span class="t" style="left:594.60px;top:153.00px;font-size:15.4px;font-weight:400;color:#fff;letter-spacing:0.000px;-webkit-text-stroke:0.5px #fff;">1</span>
<span class="t" style="left:1031.00px;top:153.00px;font-size:15.4px;font-weight:400;color:#fff;letter-spacing:0.000px;-webkit-text-stroke:0.5px #fff;">2</span>
<span class="t" style="left:1451.50px;top:153.00px;font-size:15.4px;font-weight:400;color:#fff;letter-spacing:0.000px;-webkit-text-stroke:0.5px #fff;">3</span>
<span class="t" style="left:1437.25px;top:212.00px;font-size:13.2px;font-weight:400;color:#757575;letter-spacing:0.150px;transform:scaleX(0.8915);transform-origin:0 0;">Diese Anfrage wird geschlossen in</span>
<span class="t" style="left:1437.25px;top:224.00px;font-size:15.4px;font-weight:400;color:#6e6e6e;letter-spacing:0.312px;-webkit-text-stroke:0.3px #6e6e6e;">6T 09:01:20</span>
<span class="t" style="left:617.00px;top:295.00px;font-size:17.6px;font-weight:400;color:#212121;letter-spacing:0.301px;">Basisinformationen</span>
<span class="t" style="left:634.25px;top:348.00px;font-size:13.2px;font-weight:400;color:#9a9a9a;letter-spacing:-0.100px;">Id</span>
<span class="t" style="left:634.25px;top:370.00px;font-size:17.6px;font-weight:400;color:#1c1c1c;letter-spacing:0.615px;">100001994</span>
<span class="t" style="left:634.25px;top:433.00px;font-size:13.2px;font-weight:400;color:#9a9a9a;letter-spacing:0.382px;">Status</span>
<span class="t" style="left:634.25px;top:455.00px;font-size:17.6px;font-weight:400;color:#1c1c1c;letter-spacing:0.570px;">Offen</span>
<span class="t" style="left:634.25px;top:518.00px;font-size:13.2px;font-weight:400;color:#9a9a9a;letter-spacing:0.338px;">Name</span>
<span class="t" style="left:634.25px;top:540.00px;font-size:17.6px;font-weight:400;color:#1c1c1c;letter-spacing:0.287px;">Demo</span>
<span class="t" style="left:634.25px;top:604.00px;font-size:13.2px;font-weight:400;color:#9a9a9a;letter-spacing:0.379px;">Erstellt von</span>
<span class="t" style="left:634.25px;top:625.00px;font-size:17.6px;font-weight:400;color:#1c1c1c;letter-spacing:0.138px;">Ben Employee 1</span>
<span class="t" style="left:634.25px;top:689.00px;font-size:13.2px;font-weight:400;color:#9a9a9a;letter-spacing:0.253px;">Geändert von</span>
<span class="t" style="left:634.25px;top:710.00px;font-size:17.6px;font-weight:400;color:#1c1c1c;letter-spacing:0.138px;">Ben Employee 1</span>
<span class="t" style="left:1124.00px;top:348.00px;font-size:13.2px;font-weight:400;color:#9a9a9a;letter-spacing:0.430px;">Erstellt am</span>
<span class="t" style="left:1124.00px;top:370.00px;font-size:17.6px;font-weight:400;color:#1c1c1c;letter-spacing:0.667px;">8/21/25, 2:42 PM</span>
<span class="t" style="left:1124.00px;top:433.00px;font-size:13.2px;font-weight:400;color:#9a9a9a;letter-spacing:0.439px;">Zuletzt geändert</span>
<span class="t" style="left:1124.00px;top:455.00px;font-size:17.6px;font-weight:400;color:#1c1c1c;letter-spacing:0.667px;">8/21/25, 2:55 PM</span>
<span class="t" style="left:1124.00px;top:518.00px;font-size:13.2px;font-weight:400;color:#9a9a9a;letter-spacing:0.535px;">Eröffnungsdatum</span>
<span class="t" style="left:1124.00px;top:540.00px;font-size:17.6px;font-weight:400;color:#1c1c1c;letter-spacing:0.667px;">8/21/25, 2:53 PM</span>
<span class="t" style="left:1124.00px;top:604.00px;font-size:13.2px;font-weight:400;color:#9a9a9a;letter-spacing:0.311px;">Enddatum</span>
<span class="t" style="left:1124.00px;top:625.00px;font-size:17.6px;font-weight:400;color:#1c1c1c;letter-spacing:0.749px;">8/28/25, 12:00 AM</span>
<span class="t" style="left:1555.50px;top:812.00px;font-size:15.4px;font-weight:400;color:#111;letter-spacing:0.159px;-webkit-text-stroke:0.5px #111;">Weiter</span>
<span class="t" style="left:559.50px;top:892.00px;font-size:15.4px;font-weight:400;color:#111;letter-spacing:0.182px;-webkit-text-stroke:0.5px #111;">Mehr Optionen</span>
<span class="t" style="left:1522.20px;top:850.00px;font-size:13.2px;font-weight:400;color:#fff;letter-spacing:0.380px;-webkit-text-stroke:0.45px #fff;">Werden nicht teilnehmen</span>
<span class="t" style="left:1592.00px;top:892.00px;font-size:15.4px;font-weight:400;color:#fff;letter-spacing:0.222px;-webkit-text-stroke:0.5px #fff;">Ablehnen</span>
</div>
</body></html>
